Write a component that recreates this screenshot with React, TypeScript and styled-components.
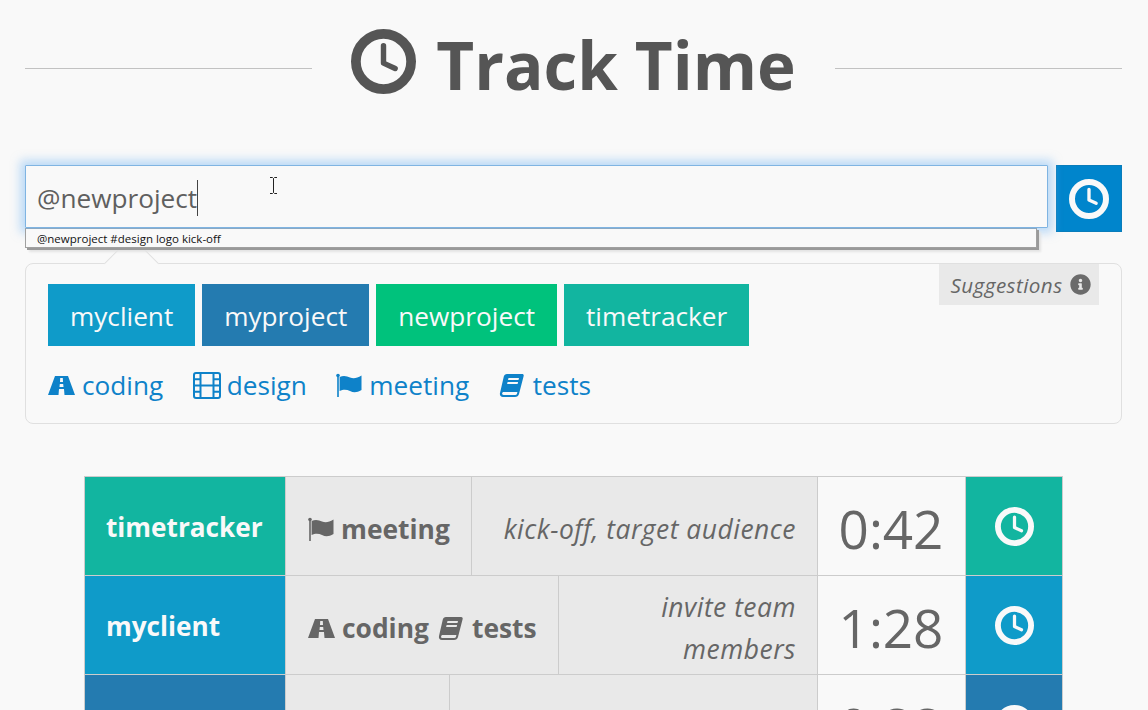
import React from "react";
import styled, { createGlobalStyle } from "styled-components";
import { FaInfoCircle } from "react-icons/fa";

const Global = createGlobalStyle`
  html, body { margin: 0; padding: 0; background: #f9f9f9; overflow: hidden; height: 710px; }
  body { font-family: "Open Sans", "Noto Sans", sans-serif; color: #5a5a5a; }
`;

const Page = styled.div`
  width: 1148px;
  height: 710px;
  overflow: hidden;
  box-sizing: border-box;
  padding: 0 26px 0 25px;
`;

const Header = styled.header`
  display: flex;
  align-items: center;
  gap: 39px;
  height: 137px;
  margin-bottom: 28px;
`;
const Rule = styled.div`
  flex: 1;
  height: 1px;
  background: #c2c2c2;
`;
const Title = styled.h1`
  display: flex;
  align-items: center;
  gap: 20px;
  margin: 0 0 15px;
  font-size: 65.5px;
  font-weight: 700;
  line-height: 80px;
  color: #555;
  white-space: nowrap;
`;
const TitleText = styled.span`
  margin-top: 7px;
  line-height: 73px;
`;

const ClockSvg = styled.svg<{ $size: number }>`
  width: ${(p) => p.$size}px;
  height: ${(p) => p.$size}px;
  display: block;
  flex: none;
`;
const Clock = ({ size }: { size: number }) => (
  <ClockSvg $size={size} viewBox="0 0 24 24" fill="none" stroke="currentColor">
    <circle cx="12" cy="12" r="10.2" strokeWidth="3.6" />
    <path d="M12 6.2V12.6L16.3 14.6" strokeWidth="2" strokeLinecap="round" strokeLinejoin="round" />
  </ClockSvg>
);

const InputRow = styled.div`
  display: flex;
  gap: 8px;
  height: 67px;
`;
const InputWrap = styled.div`
  position: relative;
  flex: 1;
`;
const Field = styled.div`
  box-sizing: border-box;
  height: 63px;
  border: 1px solid #7fb4e2;
  box-shadow: 0 0 10px 5px rgba(130, 190, 245, 0.5);
  border-radius: 1px;
  background: #f9f9f9;
  padding: 2px 0 0 11px;
  display: flex;
  align-items: center;
  font-size: 26.2px;
  color: #5f5f5f;
  position: relative;
  z-index: 2;
`;
const Caret = styled.span`
  display: inline-block;
  width: 1px;
  height: 36px;
  background: #444;
`;
const IBeam = styled.svg`
  position: absolute;
  left: 243px;
  top: 11px;
  width: 9px;
  height: 17px;
`;
const Popup = styled.div`
  position: absolute;
  left: 0;
  top: 63px;
  width: 1012px;
  height: 20px;
  box-sizing: border-box;
  background: #f9f9f9;
  border: 1px solid #a0a0a0;
  border-top: 1px solid #8aa9c4;
  box-shadow: 2px 2px 0 #9a9a9a, 4px 4px 2px #e4e4e4;
  padding-left: 11px;
  font-size: 11.5px;
  line-height: 19px;
  color: #111;
  z-index: 3;
`;
const GoButton = styled.div`
  width: 66px;
  flex: none;
  background: #0085cc;
  border: 1px solid #0a7dbb;
  box-sizing: border-box;
  color: #f9f9f9;
  display: flex;
  align-items: center;
  justify-content: center;
`;

const Panel = styled.section`
  position: relative;
  margin-top: 31px;
  height: 161px;
  box-sizing: border-box;
  border: 1px solid #e0e0e0;
  border-radius: 8px;
  padding: 20px 22px 0;
`;
const Tip = styled.div`
  position: absolute;
  left: 86px;
  top: -20px;
  width: 39px;
  height: 39px;
  box-sizing: border-box;
  background: #f9f9f9;
  border-left: 1px solid #e0e0e0;
  border-top: 1px solid #e0e0e0;
  transform: rotate(45deg);
`;
const Hint = styled.div`
  position: absolute;
  right: 22px;
  top: 0;
  width: 160px;
  height: 41px;
  box-sizing: border-box;
  padding-left: 3px;
  background: #e9e9e9;
  display: flex;
  align-items: center;
  justify-content: center;
  gap: 7px;
  font-size: 20.6px;
  letter-spacing: 0.45px;
  font-style: italic;
  color: #666;
`;
const ProjectRow = styled.div`
  position: relative;
  display: flex;
  gap: 7px;
`;
const Project = styled.div<{ $bg: string }>`
  height: 62px;
  box-sizing: border-box;
  padding: 1px 22px 0;
  display: flex;
  align-items: center;
  font-size: 26.2px;
  color: #f9f9f9;
  background: ${(p) => p.$bg};
`;
const TagRow = styled.div`
  display: flex;
  gap: 29.5px;
  margin-top: 21px;
  height: 36px;
`;
const TagLink = styled.div`
  display: flex;
  align-items: center;
  gap: 7px;
  font-size: 26.2px;
  color: #0e82c9;
`;
const TagSvg = styled.svg<{ $w: number; $h?: number; $after?: number }>`
  width: ${(p) => p.$w}px;
  height: ${(p) => p.$h ?? 25}px;
  margin-right: ${(p) => p.$after ?? 0}px;
  display: block;
  flex: none;
`;

const Road = () => (
  <TagSvg $w={27} viewBox="0 0 27 25" fill="currentColor">
    <path
      fillRule="evenodd"
      d="M7 3H20L27 22H16.5L16 16H11L10.5 22H0ZM12.2 5L12 9H15L14.8 5ZM11.8 11L11.5 14H15.5L15.2 11Z"
    />
  </TagSvg>
);
const Film = () => (
  <TagSvg $w={28} $h={27} $after={-1} viewBox="0 0 28 27" fill="none" stroke="currentColor" strokeWidth="2">
    <rect x="1" y="1" width="26" height="25" rx="2" />
    <path d="M7.5 1V26M20.5 1V26M1 7.2H7.5M1 13.5H7.5M1 19.8H7.5M20.5 7.2H27M20.5 13.5H27M20.5 19.8H27M7.5 13.5H20.5" />
  </TagSvg>
);
const Flag = () => (
  <TagSvg $w={26} viewBox="0 0 26 25" fill="currentColor">
    <circle cx="2" cy="2.5" r="1.8" />
    <rect x="1.2" y="3" width="1.6" height="21" />
    <path d="M3.6 4C7.5 2 11 3 14 4.5C18 6 21 5 25.5 2.5V17C21 19.5 18 20 14 18C11 16.5 7.5 16 3.6 18Z" />
  </TagSvg>
);
const Book = () => (
  <TagSvg $w={26} $after={1} viewBox="0 0 26 25" fill="currentColor">
    <path
      fillRule="evenodd"
      d="M8 1H23C24.5 1 25 2 24.6 3.2L20 21C19.5 23 18 24 16 24H4C1.5 24 0.5 22 1 20L4.8 3.5C5.2 2 6.3 1 8 1ZM9.5 5L9 7H19.5L20 5ZM8.6 9L8.1 11H18.6L19.1 9ZM4.8 19C3.8 19 3.2 19.6 3.1 20.4C3 21.3 3.6 22 4.6 22H16.5C17.4 22 17.8 21.5 18 20.8L18.4 19Z"
    />
  </TagSvg>
);

const Table = styled.div`
  margin: 52px 59px 0;
  border: 1px solid #ccc;
  border-bottom: none;
`;
const Row = styled.div`
  display: flex;
  height: 99px;
  box-sizing: border-box;
  border-bottom: 1px solid #ccc;
`;
const NameCell = styled.div<{ $bg: string }>`
  width: 200px;
  flex: none;
  box-sizing: border-box;
  padding: 2px 0 0 21px;
  display: flex;
  align-items: center;
  background: ${(p) => p.$bg};
  color: #f9f9f9;
  font-size: 26.2px;
  font-weight: 700;
`;
const TagsCell = styled.div`
  flex: none;
  box-sizing: border-box;
  padding: 6px 21.5px 0 22px;
  display: flex;
  align-items: center;
  gap: 9px;
  background: #e9e9e9;
  border-left: 1px solid #ccc;
  color: #666;
  font-size: 26.4px;
  font-weight: 700;
`;
const TagItem = styled.span`
  display: flex;
  align-items: center;
  gap: 7px;
`;
const NoteCell = styled.div`
  flex: 1;
  min-width: 0;
  box-sizing: border-box;
  padding: 6px 21px 0 21px;
  display: flex;
  align-items: center;
  justify-content: flex-end;
  text-align: right;
  background: #e9e9e9;
  border-left: 1px solid #ccc;
  color: #666;
  font-size: 26.4px;
  letter-spacing: 0.52px;
  font-style: italic;
  line-height: 42px;
`;
const TimeCell = styled.div`
  width: 148px;
  flex: none;
  box-sizing: border-box;
  border-left: 1px solid #ccc;
  padding: 4px 1px 0 0;
  display: flex;
  align-items: center;
  justify-content: center;
  font-size: 53px;
  color: #666;
`;
const ActionCell = styled.div<{ $bg: string }>`
  width: 97px;
  flex: none;
  box-sizing: border-box;
  display: flex;
  align-items: center;
  justify-content: center;
  border-left: 1px solid #ccc;
  background: ${(p) => p.$bg};
  color: #f9f9f9;
`;

const projects = [
  { name: "myclient", bg: "#0f9bc9" },
  { name: "myproject", bg: "#247bb0" },
  { name: "newproject", bg: "#00c27c" },
  { name: "timetracker", bg: "#12b5a0" },
];

const rows = [
  {
    name: "timetracker",
    bg: "#12b5a0",
    tags: [{ icon: <Flag />, label: "meeting" }],
    note: "kick-off, target audience",
    time: "0:42",
  },
  {
    name: "myclient",
    bg: "#0f9bc9",
    tags: [
      { icon: <Road />, label: "coding" },
      { icon: <Book />, label: "tests" },
    ],
    note: "invite team members",
    time: "1:28",
  },
  {
    name: "myproject",
    bg: "#247bb0",
    tags: [{ icon: <Film />, label: "design" }],
    note: "logo",
    time: "0:33",
  },
];

export default function App() {
  return (
    <Page>
      <Global />
      <Header>
        <Rule />
        <Title>
          <Clock size={65} />
          <TitleText>Track Time</TitleText>
        </Title>
        <Rule />
      </Header>
      <InputRow>
        <InputWrap>
          <Field>
            @newproject
            <Caret />
            <IBeam viewBox="0 0 9 17" fill="none" stroke="#222" strokeWidth="1">
              <path d="M1 .5H3.5L4.5 1.5L5.5 .5H8M4.5 1.5V15.5M1 16.5H3.5L4.5 15.5L5.5 16.5H8" />
            </IBeam>
          </Field>
          <Popup>@newproject #design logo kick-off</Popup>
        </InputWrap>
        <GoButton>
          <Clock size={40} />
        </GoButton>
      </InputRow>
      <Panel>
        <Tip />
        <Hint>
          Suggestions
          <FaInfoCircle size={21} color="#6b6b6b" />
        </Hint>
        <ProjectRow>
          {projects.map((p) => (
            <Project key={p.name} $bg={p.bg}>
              {p.name}
            </Project>
          ))}
        </ProjectRow>
        <TagRow>
          <TagLink><Road />coding</TagLink>
          <TagLink><Film />design</TagLink>
          <TagLink><Flag />meeting</TagLink>
          <TagLink><Book />tests</TagLink>
        </TagRow>
      </Panel>
      <Table>
        {rows.map((r) => (
          <Row key={r.name}>
            <NameCell $bg={r.bg}>{r.name}</NameCell>
            <TagsCell>
              {r.tags.map((t) => (
                <TagItem key={t.label}>
                  {t.icon}
                  {t.label}
                </TagItem>
              ))}
            </TagsCell>
            <NoteCell>{r.note}</NoteCell>
            <TimeCell>{r.time}</TimeCell>
            <ActionCell $bg={r.bg}>
              <Clock size={39} />
            </ActionCell>
          </Row>
        ))}
      </Table>
    </Page>
  );
}
